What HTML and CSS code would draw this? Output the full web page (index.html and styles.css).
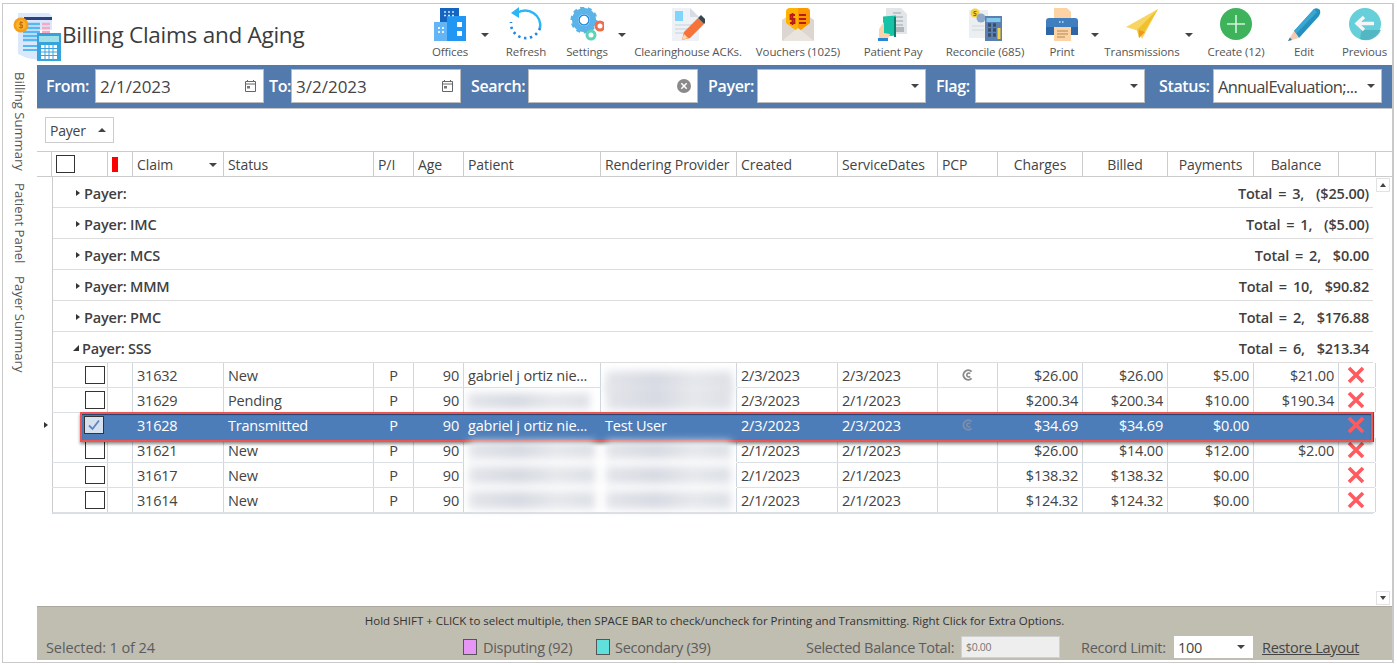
FILE: index.html
```html
<!DOCTYPE html>
<html lang="en">
<head>
<meta charset="utf-8">
<title>Billing Claims and Aging</title>
<link rel="stylesheet" href="styles.css">
</head>
<body>
<svg class="defs" width="0" height="0" aria-hidden="true">
  <symbol id="x" viewBox="0 0 18 18"><path d="M2 2 L16 16 M16 2 L2 16" stroke="#ff5a5f" stroke-width="3.6" fill="none"/></symbol>
  <symbol id="cc" viewBox="0 0 12 12"><path d="M9.6 2.6 A4.8 4.8 0 1 0 9.6 9.4" stroke="currentColor" stroke-width="2" fill="none"/><path d="M8.2 4.6 A2 2 0 1 0 8.2 7.4" stroke="currentColor" stroke-width="1.6" fill="none"/></symbol>
  <symbol id="cal" viewBox="0 0 13 14"><path d="M1.5 2.5 H11.5 V12.5 H1.5 Z M1.5 5 H11.5 M3.5 1 V3 M9.5 1 V3" stroke="#666" fill="none"/><rect x="3" y="7" width="3" height="2.5" fill="#777"/></symbol>
</svg>
<div class="window">
  <header class="top">
    <div class="brand">
      <svg class="logo" width="60" height="54" viewBox="0 0 60 54">
        <path d="M9 5 H40 L43 8 V22 H30 V52 L18 50 L9 46 Z" fill="#d9e8fb"/>
        <rect x="15" y="9" width="28" height="3" fill="#2d3f7f"/>
        <path d="M14 16 H31 M14 20 H31 M14 24 H31 M14 28 H30 M14 32 H30" stroke="#55b7f3" stroke-width="2.4"/>
        <path d="M33 16 H41 M33 20 H41 M33 24 H41" stroke="#f6a8c4" stroke-width="2.4"/>
        <path d="M14 38 H30 M14 42 H30" stroke="#55b7f3" stroke-width="2"/>
        <rect x="28" y="25" width="24" height="28" fill="#36a3dd"/>
        <rect x="30" y="28" width="20" height="6" fill="#9fe1e6"/>
        <path d="M32 37 H48 V51 H32 Z" fill="#fff"/>
        <path d="M36 37 V51 M40 37 V51 M44 37 V51 M32 40.500 H48 M32 44 H48 M32 47.500 H48" stroke="#36a3dd" stroke-width="1"/>
        <circle cx="12" cy="17" r="7.500" fill="#f59f18"/>
        <circle cx="12" cy="17" r="5" fill="#f8b42c"/>
        <path d="M14 14.500 H11 V17 H13.500 V19.500 H10 M12 13 V21" stroke="#c76a10" fill="none"/>
      </svg>
      <h1 class="title">Billing Claims and Aging</h1>
    </div>
    <nav class="tools">
      <div class="tool w-offices">
        <svg class="ticon" width="34" height="34" viewBox="0 0 34 34"><rect x="7" y="1" width="19" height="17" fill="#1565c0"/><rect x="1" y="15" width="15" height="19" fill="#64b5f6"/><rect x="14" y="9" width="19" height="25" fill="#2196f3"/><path d="M11 5 H21 M11 8.500 H21" stroke="#cfe6fb" stroke-width="1.500" stroke-dasharray="2 2"/><path d="M5 21 H12 M5 25 H12" stroke="#e3f2fd" stroke-width="2" stroke-dasharray="2 2"/><rect x="24" y="15" width="5" height="5" fill="#fff"/><rect x="24" y="24" width="5" height="5" fill="#fff"/></svg>
        <span class="tlabel">Offices</span>
      </div>
      <span class="caret c-a"></span>
      <div class="tool w-refresh">
        <svg class="ticon" width="34" height="34" viewBox="0 0 34 34"><path d="M8 6 A15 15 0 0 1 31 21" stroke="#29b6f6" stroke-width="2.600" fill="none"/><path d="M10 0 L10 11 L2 6 Z" fill="#29b6f6"/><path d="M31 21 A15 15 0 0 1 3 22 A15 15 0 0 1 2 15" stroke="#1e88e5" stroke-width="2.600" fill="none" stroke-dasharray="2.400 3.600"/></svg>
        <span class="tlabel">Refresh</span>
      </div>
      <div class="tool w-settings">
        <svg class="ticon" width="34" height="34" viewBox="0 0 34 34"><circle cx="14" cy="13" r="9" fill="none" stroke="#5cb3e8" stroke-width="6"/><circle cx="14" cy="13" r="12" fill="none" stroke="#5cb3e8" stroke-width="3" stroke-dasharray="4 3.500"/><circle cx="14" cy="13" r="5" fill="#fff" stroke="#1e88e5" stroke-width="1.500"/><circle cx="30" cy="19" r="4" fill="#fff" stroke="#ef6c4d" stroke-width="3"/><circle cx="21" cy="28" r="4" fill="#fff" stroke="#5fd3b6" stroke-width="3"/></svg>
        <span class="tlabel">Settings</span>
      </div>
      <span class="caret c-b"></span>
      <div class="tool w-clear">
        <svg class="ticon" width="34" height="34" viewBox="0 0 34 34"><path d="M1 1 H19 L28 10 V34 H1 Z" fill="#eef2f6"/><path d="M19 1 L28 10 H19 Z" fill="#d5dce3"/><rect x="4" y="4" width="8" height="10" fill="#81d4fa"/><path d="M4 18 H22 M4 22 H18 M4 26 H14" stroke="#d5dce3" stroke-width="1.500"/><path d="M11 33 L13 25 L27 11 L33 17 L19 31 Z" fill="#f4743b"/><path d="M27 11 L30 8 L36 14 L33 17 Z" fill="#37474f"/><path d="M11 33 L13 27 L17 31 Z" fill="#fcd9b0"/></svg>
        <span class="tlabel">Clearinghouse ACKs.</span>
      </div>
      <div class="tool w-vouch">
        <svg class="ticon" width="34" height="34" viewBox="0 0 34 34"><path d="M1 13 L17 2 L33 13 V34 H1 Z" fill="#ddd5d0"/><path d="M5 5 Q5 1 9 1 H25 Q29 1 29 5 V16 L17 25 L5 16 Z" fill="#ffb300"/><path d="M17 1 H25 Q29 1 29 5 V16 L17 25 Z" fill="#ff9800"/><path d="M14 8 H9.500 V12 H13.500 V16 H9 M11.500 6 V18" stroke="#b71c1c" stroke-width="1.800" fill="none"/><path d="M18 8 H25 M18 12 H25 M18 16 H25" stroke="#b71c1c" stroke-width="2"/><path d="M1 34 L17 21 L33 34 Z" fill="#eae4df"/></svg>
        <span class="tlabel">Vouchers (1025)</span>
      </div>
      <div class="tool w-pay">
        <svg class="ticon" width="34" height="34" viewBox="0 0 34 34"><path d="M10 1 H25 L31 7 V27 H10 Z" fill="#e3e6e8"/><path d="M17 6 H25 M17 10 H27 M17 14 H27 M17 18 H27" stroke="#9aa5ab" stroke-width="1.200"/><rect x="17" y="20" width="11" height="5" fill="#b0b8bc"/><rect x="7" y="10" width="13" height="20" fill="#18c2a6" transform="skewY(-4)"/><rect x="18" y="10" width="2" height="20" fill="#0b7f6e"/><path d="M3 33 V22 L8 15 V26 L14 27 Q13 32 9 33 Z" fill="#fcd3ab"/><rect x="2" y="31" width="10" height="3" fill="#2b86d8"/></svg>
        <span class="tlabel">Patient Pay</span>
      </div>
      <div class="tool w-rec">
        <svg class="ticon" width="34" height="34" viewBox="0 0 34 34"><rect x="1" y="3" width="19" height="28" fill="#eceff1"/><path d="M4 19 H16 M4 23 H16" stroke="#cfd8dc"/><circle cx="7" cy="6" r="4.500" fill="#f4d03f"/><circle cx="13" cy="11" r="4.500" fill="#8fa8c8"/><path d="M8.500 4.500 H6 V6.500 H8 V8.500 H5.500" stroke="#8a6d10" fill="none"/><rect x="17" y="9" width="17" height="25" fill="#5b7fb0"/><rect x="18.500" y="11" width="14" height="4" fill="#7fc9ea"/><path d="M20 18 H23 M25 18 H28 M20 23 H23 M25 23 H28 M20 28 H23 M25 28 H28" stroke="#3a4d68" stroke-width="3.400"/><rect x="29.500" y="21" width="3" height="11" fill="#f6d33c"/></svg>
        <span class="tlabel">Reconcile (685)</span>
      </div>
      <div class="tool w-print">
        <svg class="ticon" width="34" height="34" viewBox="0 0 34 34"><path d="M9 1 H22 L26 5 V14 H9 Z" fill="#fbd3a5"/><path d="M4 11 H30 Q33 11 33 14 V28 H1 V14 Q1 11 4 11 Z" fill="#3f7fc0"/><rect x="1" y="20" width="32" height="8" fill="#2d66a8"/><path d="M14 15 H20" stroke="#cfe3f6" stroke-dasharray="1.500 1.500" stroke-width="1.500"/><rect x="9" y="20" width="17" height="14" fill="#fbd3a5"/><path d="M12 24 H23 M12 27 H23 M12 30 H20" stroke="#b9854f"/></svg>
        <span class="tlabel">Print</span>
      </div>
      <span class="caret c-c"></span>
      <div class="tool w-trans">
        <svg class="ticon" width="34" height="34" viewBox="0 0 34 34"><path d="M33 2 L1 20 L14 24 L17 32 Z" fill="#f7d560"/><path d="M33 2 L12 23 L14 31 L20 24 Z" fill="#f0c12e"/><path d="M14 23 L14 31 L20 25 Z" fill="#f09a1c"/></svg>
        <span class="tlabel">Transmissions</span>
      </div>
      <span class="caret c-d"></span>
      <div class="tool w-create">
        <svg class="ticon" width="34" height="34" viewBox="0 0 34 34"><circle cx="17" cy="17" r="16" fill="#3fb25c"/><path d="M17 8 V26 M8 17 H26" stroke="#d4f2dc" stroke-width="1.600"/></svg>
        <span class="tlabel">Create (12)</span>
      </div>
      <div class="tool w-edit">
        <svg class="ticon" width="34" height="34" viewBox="0 0 34 34"><path d="M7 24 L27 2 Q30 0 33 3 Q34 6 32 9 L12 31 Z" fill="#2490bd"/><path d="M7 24 L27 2 L30 5 L9 27 Z" fill="#3aa7d3"/><path d="M1 34 L7 24 L12 31 Z" fill="#f6c9b0"/><path d="M1 34 L3 30.500 L5 33 Z" fill="#2a7fa8"/></svg>
        <span class="tlabel">Edit</span>
      </div>
      <div class="tool w-prev">
        <svg class="ticon" width="34" height="34" viewBox="0 0 34 34"><circle cx="17" cy="17" r="16" fill="#66cfd9"/><path d="M16 9 L9 16 L16 23 L33 23 A16 16 0 0 1 12 32 Z" fill="#4db0bd" opacity=".8"/><path d="M16 10 L9 16.500 L16 23 M9 16.500 H26" stroke="#f3f6f6" stroke-width="3.400" fill="none"/></svg>
        <span class="tlabel">Previous</span>
      </div>
    </nav>
  </header>
  <div class="body">
    <aside class="side">
      <span class="vtab v1">Billing Summary</span>
      <span class="vtab v2">Patient Panel</span>
      <span class="vtab v3">Payer Summary</span>
    </aside>
    <main class="main">
      <form class="filters">
        <label class="flabel l-from">From:</label>
        <div class="field f-a"><span class="val">2/1/2023</span><svg class="fico" width="13" height="14"><use href="#cal"/></svg></div>
        <label class="flabel l-to">To:</label>
        <div class="field f-b"><span class="val">3/2/2023</span><svg class="fico" width="13" height="14"><use href="#cal"/></svg></div>
        <label class="flabel l-search">Search:</label>
        <div class="field f-b"><span class="val"></span><svg class="fico" width="14" height="14" viewBox="0 0 14 14"><circle cx="7" cy="7" r="7" fill="#8a8a8a"/><path d="M4.300 4.300 L9.700 9.700 M9.700 4.300 L4.300 9.700" stroke="#fff" stroke-width="1.500"/></svg></div>
        <label class="flabel l-payer">Payer:</label>
        <div class="field f-a"><span class="val"></span><span class="caret small"></span></div>
        <label class="flabel l-flag">Flag:</label>
        <div class="field f-b"><span class="val"></span><span class="caret small"></span></div>
        <label class="flabel l-status">Status:</label>
        <div class="field f-a"><span class="val narrow">AnnualEvaluation;...</span><span class="caret small"></span></div>
      </form>
      <div class="groupbar"><div class="chip">Payer<span class="caret up"></span></div></div>
      <div class="thead">
        <div class="marker"></div>
        <div class="cols">
          <div class="th box"><span class="check hcheck"></span></div>
          <div class="th box"><span class="flag"></span></div>
          <div class="th claimh">Claim<span class="caret small"></span></div>
          <div class="th">Status</div>
          <div class="th">P/I</div>
          <div class="th">Age</div>
          <div class="th">Patient</div>
          <div class="th">Rendering Provider</div>
          <div class="th">Created</div>
          <div class="th">ServiceDates</div>
          <div class="th">PCP</div>
          <div class="th ctr">Charges</div>
          <div class="th ctr">Billed</div>
          <div class="th ctr">Payments</div>
          <div class="th ctr">Balance</div>
          <div class="th"></div>
        </div>
      </div>
      <div class="tbody">
        <div class="table">
          <div class="grp"><span class="arrow"></span><span class="gname">Payer:</span><span class="gtotal">Total = 3,&nbsp; ($25.00)</span></div>
          <div class="grp"><span class="arrow"></span><span class="gname">Payer: IMC</span><span class="gtotal">Total = 1,&nbsp; ($5.00)</span></div>
          <div class="grp"><span class="arrow"></span><span class="gname">Payer: MCS</span><span class="gtotal">Total = 2,&nbsp; $0.00</span></div>
          <div class="grp"><span class="arrow"></span><span class="gname">Payer: MMM</span><span class="gtotal">Total = 10,&nbsp; $90.82</span></div>
          <div class="grp"><span class="arrow"></span><span class="gname">Payer: PMC</span><span class="gtotal">Total = 2,&nbsp; $176.88</span></div>
          <div class="grp"><span class="arrow open"></span><span class="gname">Payer: SSS</span><span class="gtotal">Total = 6,&nbsp; $213.34</span></div>

          <div class="cols row">
            <div class="td chk"><span class="check"></span></div><div class="td"></div><div class="td">31632</div><div class="td">New</div><div class="td ctr">P</div><div class="td num">90</div>
            <div class="td">gabriel j ortiz nie...</div><div class="td wipe"><span class="smear s-top"></span></div>
            <div class="td">2/3/2023</div><div class="td">2/3/2023</div><div class="td ctr"><svg class="cc" width="12" height="12"><use href="#cc"/></svg></div>
            <div class="td num">$26.00</div><div class="td num">$26.00</div><div class="td num">$5.00</div><div class="td num">$21.00</div><div class="td xc"><svg width="18" height="18"><use href="#x"/></svg></div>
          </div>
          <div class="cols row">
            <div class="td chk"><span class="check"></span></div><div class="td"></div><div class="td">31629</div><div class="td">Pending</div><div class="td ctr">P</div><div class="td num">90</div>
            <div class="td"><span class="smear s-one"></span></div><div class="td"><span class="smear s-mid"></span></div>
            <div class="td">2/3/2023</div><div class="td">2/1/2023</div><div class="td"></div>
            <div class="td num">$200.34</div><div class="td num">$200.34</div><div class="td num">$10.00</div><div class="td num">$190.34</div><div class="td xc"><svg width="18" height="18"><use href="#x"/></svg></div>
          </div>
          <div class="cols row sel">
            <span class="pointer"></span>
            <div class="td chk"><span class="check on"><svg width="14" height="12" viewBox="0 0 14 12"><path d="M2 6.500 L5.500 10 L12 1.500" stroke="#5b85c0" stroke-width="1.800" fill="none"/></svg></span></div><div class="td"></div><div class="td">31628</div><div class="td">Transmitted</div><div class="td ctr">P</div><div class="td num">90</div>
            <div class="td">gabriel j ortiz nie...</div><div class="td">Test User</div>
            <div class="td">2/3/2023</div><div class="td">2/3/2023</div><div class="td ctr"><svg class="cc" width="12" height="12"><use href="#cc"/></svg></div>
            <div class="td num">$34.69</div><div class="td num">$34.69</div><div class="td num">$0.00</div><div class="td num"></div><div class="td xc"><svg width="18" height="18"><use href="#x"/></svg></div>
          </div>
          <div class="cols row">
            <div class="td chk"><span class="check"></span></div><div class="td"></div><div class="td">31621</div><div class="td">New</div><div class="td ctr">P</div><div class="td num">90</div>
            <div class="td wipe pat"><span class="smear s-wide"></span></div><div class="td wipe"><span class="smear s-wide"></span></div>
            <div class="td">2/1/2023</div><div class="td">2/1/2023</div><div class="td"></div>
            <div class="td num">$26.00</div><div class="td num">$14.00</div><div class="td num">$12.00</div><div class="td num">$2.00</div><div class="td xc"><svg width="18" height="18"><use href="#x"/></svg></div>
          </div>
          <div class="cols row">
            <div class="td chk"><span class="check"></span></div><div class="td"></div><div class="td">31617</div><div class="td">New</div><div class="td ctr">P</div><div class="td num">90</div>
            <div class="td wipe pat"><span class="smear s-wide"></span></div><div class="td wipe"><span class="smear s-wide"></span></div>
            <div class="td">2/1/2023</div><div class="td">2/1/2023</div><div class="td"></div>
            <div class="td num">$138.32</div><div class="td num">$138.32</div><div class="td num">$0.00</div><div class="td num"></div><div class="td xc"><svg width="18" height="18"><use href="#x"/></svg></div>
          </div>
          <div class="cols row">
            <div class="td chk"><span class="check"></span></div><div class="td"></div><div class="td">31614</div><div class="td">New</div><div class="td ctr">P</div><div class="td num">90</div>
            <div class="td pat"><span class="smear s-last"></span></div><div class="td"><span class="smear s-last"></span></div>
            <div class="td">2/1/2023</div><div class="td">2/1/2023</div><div class="td"></div>
            <div class="td num">$124.32</div><div class="td num">$124.32</div><div class="td num">$0.00</div><div class="td num"></div><div class="td xc"><svg width="18" height="18"><use href="#x"/></svg></div>
          </div>
        </div>
        <div class="scroll">
          <span class="sbtn"><span class="caret tiny up"></span></span>
          <span class="sbtn"><span class="caret tiny"></span></span>
        </div>
      </div>
      <footer class="foot">
        <div class="hint">Hold SHIFT + CLICK to select multiple, then SPACE BAR to check/uncheck for Printing and Transmitting. Right Click for Extra Options.</div>
        <div class="fline">
          <span class="selcount">Selected: 1 of 24</span>
          <span class="swatch pink"></span><span class="legend lg1">Disputing (92)</span>
          <span class="swatch teal"></span><span class="legend lg2">Secondary (39)</span>
          <span class="legend lg3">Selected Balance Total:</span>
          <span class="balbox">$0.00</span>
          <span class="legend lg4">Record Limit:</span>
          <span class="limit">100<span class="caret small"></span></span>
          <a class="restore" href="#">Restore Layout</a>
        </div>
      </footer>
    </main>
  </div>
</div>
</body>
</html>
```

FILE: styles.css
```css
* { box-sizing: border-box; }
html, body { margin: 0; padding: 0; height: 100%; background: #fff; }
body { font-family: "Open Sans", "Noto Sans", sans-serif; color: #444; overflow: hidden; }
.defs { position: absolute; }

.window {
  width: 1392px; height: 660px; margin: 3px 0 0 2px;
  border: 1px solid #c9c9c9; border-right-width: 2px;
  display: flex; flex-direction: column;
}

/* top bar */
.top { height: 61px; display: flex; flex: none; }
.brand { display: flex; align-items: flex-start; }
.logo { margin: 4px 0 0 6px; flex: none; }
.title { margin: 15px 0 0 -7px; font-size: 22.5px; font-weight: 500; line-height: 32px; color: #3c3c3c; letter-spacing: -.26px; white-space: nowrap; }
.tools { margin-left: auto; display: flex; }
.tool { display: flex; flex-direction: column; align-items: center; padding-top: 3px; flex: none; }
.ticon { display: block; flex: none; }
.tlabel { margin-top: 3px; font-size: 11.5px; line-height: 16px; color: #555; white-space: nowrap; letter-spacing: -.12px; }
.w-offices { width: 60px; }
.w-refresh { width: 72px; }
.w-settings { width: 50px; }
.w-clear { width: 112px; }
.w-vouch { width: 108px; }
.w-pay { width: 82px; }
.w-rec { width: 102px; }
.w-print { width: 52px; }
.w-trans { width: 80px; }
.w-create { width: 70px; }
.w-edit { width: 66px; }
.w-prev { width: 55px; }

.caret { display: inline-block; width: 0; height: 0; border-left: 4px solid transparent; border-right: 4px solid transparent; border-top: 4px solid #444; flex: none; }
.c-a, .c-b, .c-c, .c-d { margin-top: 29px; }
.c-a { margin-left: 1px; margin-right: 1px; }
.c-b { margin-left: 6px; margin-right: 6px; }
.c-c { margin-left: 3px; margin-right: 3px; }
.c-d { margin-left: 3px; margin-right: 8px; }
.caret.up { border-top: 0; border-bottom: 4px solid #444; }
.caret.small { border-left-width: 4px; border-right-width: 4px; }
.caret.tiny { border-left-width: 3px; border-right-width: 3px; border-top-width: 4px; }
.caret.tiny.up { border-top-width: 0; border-bottom-width: 4px; }

/* body */
.body { flex: 1; display: flex; min-height: 0; }
.side { width: 34px; flex: none; position: relative; display: flex; flex-direction: column; align-items: center; padding-top: 7px; }
.vtab { writing-mode: vertical-rl; font-size: 13.100px; line-height: 16px; color: #555; white-space: nowrap; }
.v1 { margin-bottom: 12px; }
.v2 { margin-bottom: 13px; }
.main { flex: 1; min-width: 0; display: flex; flex-direction: column; }

/* filters */
.filters { height: 44px; flex: none; background: #527aad; border-bottom: 1px solid #c5c5c5; display: flex; align-items: flex-start; padding: 4px 0 0 9px; }
.flabel { font-size: 16px; font-weight: 600; line-height: 34px; color: #fff; white-space: nowrap; letter-spacing: -.35px; flex: none; }
.l-from { width: 49px; }
.l-to { width: 22px; margin-left: 5px; }
.l-search { width: 57px; margin-left: 10px; }
.l-payer { width: 49px; margin-left: 10px; }
.l-flag { width: 39px; margin-left: 10px; }
.l-status { width: 54px; margin-left: 14px; }
.field { height: 34px; background: #fff; border: 1px solid #bcbcbc; display: flex; align-items: center; justify-content: space-between; padding: 0 6px 0 4px; flex: none; }
.f-a { width: 169px; }
.f-b { width: 170px; }
.val { font-size: 17px; color: #444; white-space: nowrap; letter-spacing: 0; }
.val.narrow { font-size: 16.500px; letter-spacing: -.62px; }
.fico { flex: none; }

/* group by */
.groupbar { height: 42px; flex: none; padding: 8px 0 0 8px; }
.chip { width: 69px; height: 26px; border: 1px solid #ccc; display: flex; align-items: center; justify-content: space-between; padding: 0 7px 0 4px; font-size: 14px; color: #444; letter-spacing: -.2px; }

/* header */
.thead { height: 26px; flex: none; display: flex; border-top: 1px solid #ccc; border-bottom: 1px solid #ccc; }
.marker { width: 15px; flex: none; border-right: 1px solid #ccc; }
.cols { display: grid; grid-template-columns: 56px 25px 91px 150px 40px 50px 137px 136px 101px 100px 60px 85px 85px 86px 85px 37px; width: 1324px; flex: none; }
.th { border-right: 1px solid #ccc; padding: 2px 0 0 4px; font-size: 14px; line-height: 22px; color: #444; white-space: nowrap; display: flex; align-items: center; letter-spacing: -.08px; min-width: 0; overflow: hidden; }
.th.box { padding-top: 0; }
.th.ctr { justify-content: center; padding-left: 0; }
.claimh { justify-content: space-between; padding-right: 6px; }
.check { display: block; width: 20px; height: 18px; border: 1px solid #333; background: #fff; flex: none; }
.hcheck { width: 19px; margin-left: 0; }
.flag { display: block; width: 6px; height: 15px; background: #f00; }

/* table body */
.tbody { flex: 1; min-height: 0; display: flex; padding-left: 15px; border-right: 0; }
.table { width: 1321px; flex: none; align-self: flex-start; border-left: 1px solid #ccc; border-bottom: 1px solid #ddd; margin-right: 3px; }
.grp { height: 31px; border-bottom: 1px solid #ddd; display: flex; align-items: center; padding: 2px 4px 0 23px; }
.arrow { width: 0; height: 0; border-top: 3.500px solid transparent; border-bottom: 3.500px solid transparent; border-left: 4px solid #333; margin-right: 4px; flex: none; }
.arrow.open { border: 0; border-right: 6px solid #333; border-top: 6px solid transparent; margin-right: 3px; margin-left: -3px; }
.gname { font-size: 14.500px; font-weight: 600; color: #3f3f3f; letter-spacing: -.2px; }
.gtotal { margin-left: auto; font-size: 14.500px; font-weight: 600; color: #3f3f3f; letter-spacing: -.2px; word-spacing: 2.400px; }

.row { width: 1323px; height: 25px; position: relative; margin-left: -1px; border-bottom: 1px solid #dcdfe3; grid-auto-rows: 24px; }
.td { border-right: 1px solid #cfd6de; padding-left: 4px; font-size: 14.500px; line-height: 26px; color: #444; white-space: nowrap; min-width: 0; letter-spacing: -.2px; position: relative; }
.td:first-child { border-left: 1px solid #ccc; }
.td.num { text-align: right; padding: 0 4px 0 0; }
.td.ctr { text-align: center; padding: 0; }
.td.chk { display: flex; align-items: center; padding-left: 32px; }
.td.xc { padding: 3px 0 0 8px; }
.td.xc svg, .td .cc { display: block; }
.td .cc { margin: 6px auto 0; color: #888; }
.check svg { display: block; margin: 2px 0 0 2px; }
.td.pat { border-right-color: #fff; }
.wipe::after { content: ""; position: absolute; left: 0; right: -1px; bottom: -1px; height: 1px; background: #fff; }

.sel { z-index: 1; border-bottom-color: transparent; }
.sel::before { content: ""; position: absolute; left: 28px; right: 2px; top: -1px; height: 26px; background: #4d7db8; border: 2px solid #ec5552; box-shadow: 0 2px 3px rgba(0,0,0,.45), 1px 0 0 #3c66a0, inset 0 1px 1px #24406e; }
.sel .td { border-right-color: transparent; color: #fff; background: transparent; }
.sel .td:first-child { border-left-color: #ccc; }
.sel .cc { color: #7c8ea8; }
.check.on { background: #d7e0ee; }
.pointer { position: absolute; left: -8px; top: 9px; width: 0; height: 0; border-top: 3.500px solid transparent; border-bottom: 3.500px solid transparent; border-left: 4px solid #333; }

.smear { position: absolute; display: block; background: linear-gradient(90deg, #e3e5ea, #d7dae2 40%, #e6e8ec 70%, #dde0e6); filter: blur(4px); z-index: 1; }
.s-top { left: 5px; right: 4px; top: 8px; bottom: -4px; }
.s-mid { left: 5px; right: 4px; top: -4px; bottom: 2px; }
.s-one { left: 4px; right: 10px; top: 5px; bottom: 3px; }
.s-wide { left: 5px; right: 5px; top: 3px; bottom: 3px; }
.s-last { left: 5px; right: 5px; top: 3px; bottom: 3px; }

.scroll { width: 16px; flex: none; display: flex; flex-direction: column; justify-content: space-between; padding: 1px 0 1px 0; }
.sbtn { width: 14px; height: 14px; border: 1px solid #e2e2e2; display: flex; align-items: center; justify-content: center; background: #fff; }

/* footer */
.foot { height: 54px; flex: none; margin-bottom: 2px; background: #c0bdb1; border-top: 1px solid #aaa89f; position: relative; display: flex; flex-direction: column; }
.hint { text-align: center; font-size: 11.500px; line-height: 16px; margin-top: 6px; color: #333; letter-spacing: -.02px; white-space: nowrap; }
.fline { display: flex; align-items: center; height: 24px; margin-top: 6px; padding-left: 9px; font-size: 14.500px; color: #5c5c5c; letter-spacing: -.3px; white-space: nowrap; }
.selcount { width: 417px; flex: none; letter-spacing: -.1px; }
.swatch { width: 14px; height: 16px; border: 1px solid #555; flex: none; }
.pink { background: #e696f5; }
.teal { background: #5fe0dc; }
.legend { flex: none; }
.lg1 { width: 113px; margin-left: 6px; }
.lg2 { width: 191px; margin-left: 5px; }
.lg3 { width: 155px; }
.balbox { width: 99px; height: 22px; background: #eeeeee; border: 1px solid #d0d0d0; font-size: 10.500px; line-height: 20px; padding-left: 4px; color: #777; flex: none; }
.lg4 { margin-left: 21px; width: 93px; }
.limit { width: 79px; height: 22px; background: #fff; padding: 0 8px 0 4px; display: flex; align-items: center; justify-content: space-between; color: #444; flex: none; }
.restore { margin-left: 9px; color: #444; text-decoration: underline; }
```
